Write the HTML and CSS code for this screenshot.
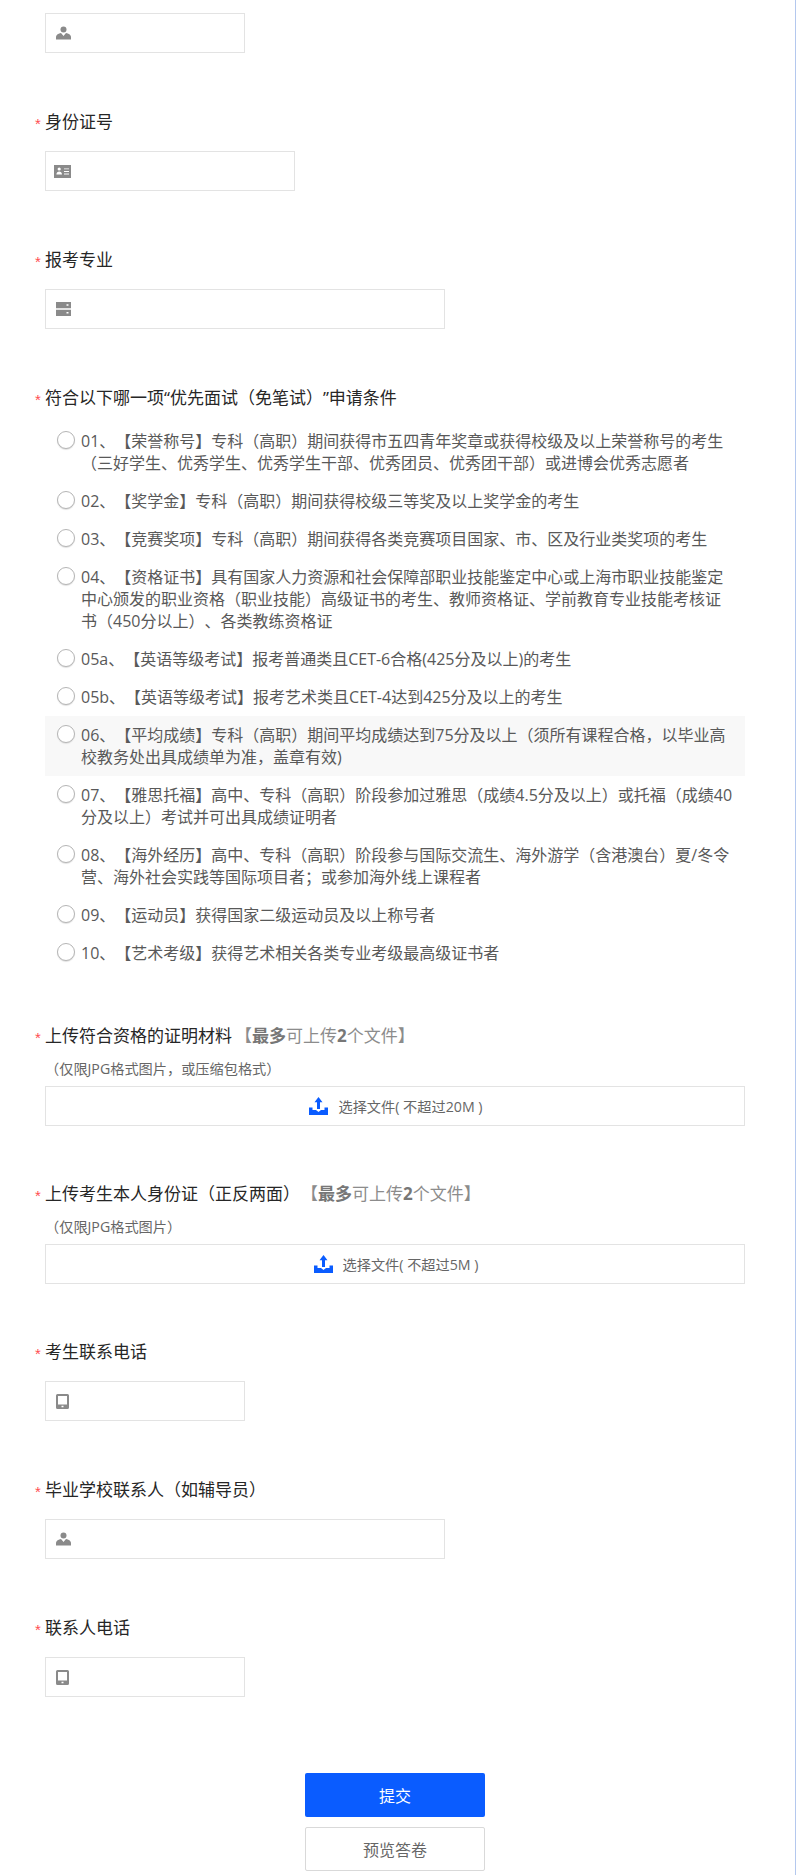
FILE: index.html
```html
<!DOCTYPE html>
<html lang="zh-CN">
<head>
<meta charset="utf-8">
<title>申请表</title>
<link rel="stylesheet" href="styles.css">
</head>
<body>
<main class="form">
  <section class="q q-first">
    <div class="field w200"><svg class="ico" viewBox="0 0 15 13"><circle cx="7.5" cy="3" r="3"/><path d="M0 13V10.3C0 8.4 2.6 7 5 6.6L7.5 9.4 10 6.6C12.4 7 15 8.4 15 10.3V13Z"/></svg></div>
  </section>
  <section class="q">
    <div class="title"><span class="star">*</span>身份证号</div>
    <div class="field w250"><svg class="ico ico-card" viewBox="0 0 17 13"><path fill-rule="evenodd" d="M0 0H17V13H0ZM5.2 2.4A1.6 1.6 0 1 0 5.2 5.6 1.6 1.6 0 1 0 5.2 2.4ZM2.4 9.6H8C8 7.6 6.6 6.6 5.2 6.6S2.4 7.6 2.4 9.6ZM10 3.4V4.3H15V3.4ZM10 6V6.9H15V6ZM10 8.6V9.5H15V8.6Z"/></svg></div>
  </section>
  <section class="q">
    <div class="title"><span class="star">*</span>报考专业</div>
    <div class="field w400"><svg class="ico" viewBox="0 0 15 14"><path fill-rule="evenodd" d="M0 0H15V6.2H0ZM10.5 2.2V3.8H12.5V2.2ZM0 7.8H15V14H0ZM10.5 10V11.6H12.5V10Z"/></svg></div>
  </section>
  <section class="q q-options">
    <div class="title"><span class="star">*</span>符合以下哪一项“优先面试（免笔试）”申请条件</div>
    <div class="options">
      <label class="opt"><span class="radio"></span><span class="opt-text">01、【荣誉称号】专科（高职）期间获得市五四青年奖章或获得校级及以上荣誉称号的考生（三好学生、优秀学生、优秀学生干部、优秀团员、优秀团干部）或进博会优秀志愿者</span></label>
      <label class="opt"><span class="radio"></span><span class="opt-text">02、【奖学金】专科（高职）期间获得校级三等奖及以上奖学金的考生</span></label>
      <label class="opt"><span class="radio"></span><span class="opt-text">03、【竞赛奖项】专科（高职）期间获得各类竞赛项目国家、市、区及行业类奖项的考生</span></label>
      <label class="opt"><span class="radio"></span><span class="opt-text">04、【资格证书】具有国家人力资源和社会保障部职业技能鉴定中心或上海市职业技能鉴定中心颁发的职业资格（职业技能）高级证书的考生、教师资格证、学前教育专业技能考核证书（450分以上）、各类教练资格证</span></label>
      <label class="opt"><span class="radio"></span><span class="opt-text">05a、【英语等级考试】报考普通类且CET-6合格(425分及以上)的考生</span></label>
      <label class="opt"><span class="radio"></span><span class="opt-text">05b、【英语等级考试】报考艺术类且CET-4达到425分及以上的考生</span></label>
      <label class="opt opt-hover"><span class="radio"></span><span class="opt-text">06、【平均成绩】专科（高职）期间平均成绩达到75分及以上（须所有课程合格，以毕业高校教务处出具成绩单为准，盖章有效)</span></label>
      <label class="opt"><span class="radio"></span><span class="opt-text">07、【雅思托福】高中、专科（高职）阶段参加过雅思（成绩4.5分及以上）或托福（成绩40分及以上）考试并可出具成绩证明者</span></label>
      <label class="opt"><span class="radio"></span><span class="opt-text">08、【海外经历】高中、专科（高职）阶段参与国际交流生、海外游学（含港澳台）夏/冬令营、海外社会实践等国际项目者；或参加海外线上课程者</span></label>
      <label class="opt"><span class="radio"></span><span class="opt-text">09、【运动员】获得国家二级运动员及以上称号者</span></label>
      <label class="opt"><span class="radio"></span><span class="opt-text">10、【艺术考级】获得艺术相关各类专业考级最高级证书者</span></label>
    </div>
  </section>
  <section class="q q-upload">
    <div class="title"><span class="star">*</span>上传符合资格的证明材料<span class="limit">【<b>最多</b>可上传<b>2</b>个文件】</span></div>
    <div class="hint">（仅限JPG格式图片，或压缩包格式）</div>
    <div class="upload"><svg class="up" viewBox="0 0 19 18"><path d="M9.5 0 13.5 5.2H11V12H8V5.2H5.5Z"/><path d="M0 10.5H3.5V13H7L9.5 15 12 13H15.5V10.5H19V18H0Z"/></svg><span>选择文件( 不超过20M )</span></div>
  </section>
  <section class="q q-upload">
    <div class="title"><span class="star">*</span>上传考生本人身份证（正反两面）<span class="limit limit-tight">【<b>最多</b>可上传<b>2</b>个文件】</span></div>
    <div class="hint">（仅限JPG格式图片）</div>
    <div class="upload"><svg class="up" viewBox="0 0 19 18"><path d="M9.5 0 13.5 5.2H11V12H8V5.2H5.5Z"/><path d="M0 10.5H3.5V13H7L9.5 15 12 13H15.5V10.5H19V18H0Z"/></svg><span>选择文件( 不超过5M )</span></div>
  </section>
  <section class="q q-contact">
    <div class="title"><span class="star">*</span>考生联系电话</div>
    <div class="field w200"><svg class="ico ico-phone" viewBox="0 0 13 15"><path fill-rule="evenodd" d="M1.5 0H11.5A1.5 1.5 0 0 1 13 1.5V13.5A1.5 1.5 0 0 1 11.5 15H1.5A1.5 1.5 0 0 1 0 13.5V1.5A1.5 1.5 0 0 1 1.5 0ZM2 2V10.5H11V2ZM5.5 11.7V13.2H7.5V11.7Z"/></svg></div>
  </section>
  <section class="q q-contact">
    <div class="title"><span class="star">*</span>毕业学校联系人（如辅导员）</div>
    <div class="field w400"><svg class="ico" viewBox="0 0 15 13"><circle cx="7.5" cy="3" r="3"/><path d="M0 13V10.3C0 8.4 2.6 7 5 6.6L7.5 9.4 10 6.6C12.4 7 15 8.4 15 10.3V13Z"/></svg></div>
  </section>
  <section class="q q-contact">
    <div class="title"><span class="star">*</span>联系人电话</div>
    <div class="field w200"><svg class="ico ico-phone" viewBox="0 0 13 15"><path fill-rule="evenodd" d="M1.5 0H11.5A1.5 1.5 0 0 1 13 1.5V13.5A1.5 1.5 0 0 1 11.5 15H1.5A1.5 1.5 0 0 1 0 13.5V1.5A1.5 1.5 0 0 1 1.5 0ZM2 2V10.5H11V2ZM5.5 11.7V13.2H7.5V11.7Z"/></svg></div>
  </section>
  <div class="actions">
    <button class="btn btn-primary" type="button">提交</button>
    <button class="btn btn-ghost" type="button">预览答卷</button>
  </div>
</main>
</body>
</html>
```

FILE: styles.css
```css
* { box-sizing: border-box; }
html, body { margin: 0; padding: 0; background: #fff; }
body { font-family: "Open Sans", "Noto Sans CJK SC", sans-serif; color: #262626; text-spacing-trim: space-all; }
.form { width: 796px; height: 1875px; padding-top: 13px; border-right: 1px solid #b4c8ee; overflow: hidden; }

.q { margin-top: 57px; }
.q-first { margin-top: 0; }
.q-upload { margin-top: 52px; }
.q-upload + .q-upload { margin-top: 56px; }
.q-contact { margin-top: 57px; }
.q-upload + .q-contact { margin-top: 56px; }

.title { display: flex; align-items: center; height: 24px; padding-left: 35px; margin-bottom: 17px; font-size: 17px; line-height: 24px; white-space: pre; }
.star { width: 10px; flex: none; margin-top: 4px; color: #ff4d4f; font-family: "Liberation Sans", sans-serif; font-size: 15px; line-height: 20px; }
.limit { color: #8c8c8c; padding-left: 3px; }
.limit b { color: #777; font-weight: 700; }
.limit-tight { padding-left: 1px; }

.field { height: 40px; border: 1px solid #e3e3e3; display: flex; align-items: center; padding-left: 10px; }
.w200 { width: 200px; margin-left: 45px; }
.w250 { width: 250px; margin-left: 45px; }
.w400 { width: 400px; margin-left: 45px; }
.ico { width: 15px; height: 14px; fill: #8a8a8a; flex: none; }
.ico-card { width: 17px; height: 13px; margin-left: -2px; }
.ico-phone { width: 13px; height: 15px; }

.q-options .title { margin-bottom: 12px; }
.options { margin-left: 45px; width: 700px; }
.opt { display: flex; padding: 8px 12px; font-size: 16px; line-height: 22px; color: #595959; }
.opt-hover { background: #f8f8f8; }
.radio { width: 18px; height: 18px; flex: none; margin: 1px 6px 0 0; border: 1px solid #b5b5b5; border-radius: 50%; background: #fff; box-shadow: 0 1px 1px #e0e0e0; }
.opt-text { flex: 1; min-width: 0; }

.q-upload .title { margin-bottom: 11px; }
.hint { height: 20px; margin: 0 0 7px 45px; font-size: 14.2px; line-height: 20px; color: #666; }
.upload { width: 700px; height: 40px; margin-left: 45px; padding-left: 2px; border: 1px solid #e3e3e3; display: flex; align-items: center; justify-content: center; gap: 10px; font-size: 14.2px; color: #666; }
.up { width: 19px; height: 18px; fill: #0a5cff; flex: none; }

.actions { margin-top: 76px; display: flex; flex-direction: column; align-items: center; gap: 10px; padding-right: 5px; }
.btn { width: 180px; height: 44px; font: inherit; font-size: 16px; border-radius: 2px; padding: 0; }
.btn-primary { background: #0a5cff; border: 0; color: #fff; }
.btn-ghost { background: #fff; border: 1px solid #d9d9d9; color: #666; }
```
